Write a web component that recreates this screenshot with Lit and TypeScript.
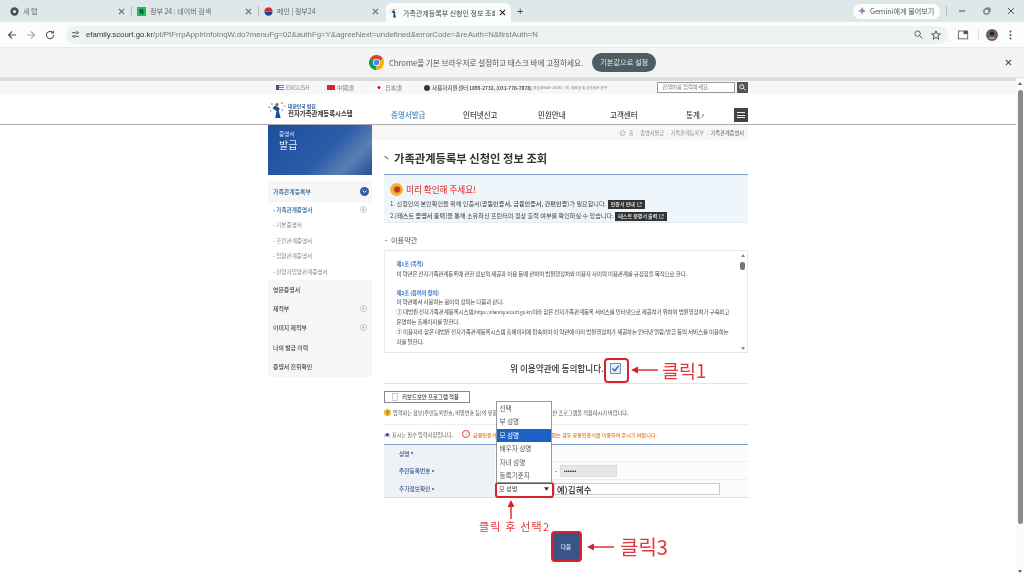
import { LitElement, css, html, svg } from 'lit'
import { customElement } from 'lit/decorators.js'

const chromeLogo = svg`<svg class="ic" width="15" height="15" viewBox="0 0 24 24">
  <path d="M12 12 L22.4 6 A12 12 0 0 0 1.6 6 Z" fill="#db4437"/>
  <path d="M12 12 L1.6 6 A12 12 0 0 0 12 24 Z" fill="#0f9d58"/>
  <path d="M12 12 L12 24 A12 12 0 0 0 22.4 6 Z" fill="#f4b400"/>
  <circle cx="12" cy="12" r="5.6" fill="#fff"/><circle cx="12" cy="12" r="4.4" fill="#4285f4"/></svg>`

const closeX = (color = '#666') => svg`<svg width="7" height="7" viewBox="0 0 8 8">
  <path d="M1 1 L7 7 M7 1 L1 7" stroke=${color} stroke-width="1.2" fill="none"/></svg>`

const familyLogo = (size: number) => svg`<svg width=${size} height=${size} viewBox="0 0 20 20">
  <path d="M8 5 L13 8 L12 11 L14 19 L8 19 L9.5 11 L5 8 Z" fill="#17508f"/>
  <circle cx="10" cy="3.8" r="1.7" fill="#d2333b"/>
  <circle cx="4.4" cy="3.4" r=".9" fill="#2f7fc4"/><circle cx="1.4" cy="7" r=".9" fill="#2f7fc4"/>
  <circle cx="3" cy="11" r=".8" fill="#3aa35a"/>
  <circle cx="15.5" cy="2.4" r=".9" fill="#3aa35a"/><circle cx="18.6" cy="6" r=".9" fill="#e2a02c"/>
  <circle cx="16" cy="10" r=".8" fill="#2f7fc4"/></svg>`

const circleIcon = svg`<svg class="ci" width="7" height="7" viewBox="0 0 8 8">
  <circle cx="4" cy="4" r="3.4" fill="#f7f7f7" stroke="#9aa5b5" stroke-width=".7"/>
  <path d="M3.2 2.6 L5 4 L3.2 5.4 Z" fill="#7c8aa0"/></svg>`

const extLink = svg`<svg width="5" height="5" viewBox="0 0 6 6">
  <path d="M2.4 1 H.6 V5.4 H5 V3.6 M3.2 .6 H5.4 V2.8 M5.2 .8 L2.8 3.2" stroke="#ddd" stroke-width=".7" fill="none"/></svg>`

const subItems = ['가족관계증명서', '기본증명서', '혼인관계증명서', '입양관계증명서', '친양자입양관계증명서']
const selectOptions = ['선택', '부 성명', '모 성명', '배우자 성명', '자녀 성명', '등록기준지']

@customElement('app-root')
export class AppRoot extends LitElement {
  render() {
    return html`
      <div class="tabstrip">
        <div class="tab t1">
          <svg width="9" height="9" viewBox="0 0 10 10"><circle cx="5" cy="5" r="4.6" fill="#4a4f50"/><circle cx="5" cy="5" r="1.8" fill="#dfe8e8"/></svg>
          <span class="tab-title">새 탭</span>${closeX()}
        </div>
        <i class="tab-sep"></i>
        <div class="tab t2">
          <span class="naver">N</span>
          <span class="tab-title">정부 24 : 네이버 검색</span>${closeX()}
        </div>
        <i class="tab-sep"></i>
        <div class="tab t3">
          <svg width="9" height="9" viewBox="0 0 10 10"><circle cx="5" cy="5" r="4.6" fill="#fff"/><path d="M.4 5 A4.6 4.6 0 0 1 9.6 5 Z" fill="#d22b3a"/><path d="M.4 5 A4.6 4.6 0 0 0 9.6 5 Z" fill="#19428f"/></svg>
          <span class="tab-title">메인 | 정부24</span>${closeX()}
        </div>
        <div class="tab active">
          ${familyLogo(10)}
          <span class="tab-title">가족관계등록부 신청인 정보 조회</span>${closeX('#222')}
        </div>
        <span class="plus">+</span>
        <span class="grow"></span>
        <div class="gemini">
          <svg width="8" height="8" viewBox="0 0 10 10"><path d="M5 0 C5.4 3 7 4.6 10 5 C7 5.4 5.4 7 5 10 C4.6 7 3 5.4 0 5 C3 4.6 4.6 3 5 0 Z" fill="#4d86e8"/><path d="M5 0 C5.4 3 7 4.6 10 5 H5 Z" fill="#e8685d"/><path d="M5 10 C4.6 7 3 5.4 0 5 H5 Z" fill="#e9b33e"/></svg>
          Gemini에게 물어보기
        </div>
        <i class="tab-sep gem-sep"></i>
        <div class="win">
          <svg width="8" height="8" viewBox="0 0 8 8"><path d="M1 4 H7" stroke="#444" stroke-width="1"/></svg>
          <svg width="8" height="8" viewBox="0 0 8 8"><rect x="1" y="2" width="5" height="5" rx="1.2" fill="none" stroke="#444"/><path d="M3 1 H7 V5" fill="none" stroke="#444" stroke-width=".8"/></svg>
          <svg width="8" height="8" viewBox="0 0 8 8"><path d="M1 1 L7 7 M7 1 L1 7" stroke="#444" stroke-width=".9"/></svg>
        </div>
      </div>

      <div class="toolbar">
        <svg class="nav-ic" width="10" height="10" viewBox="0 0 10 10"><path d="M9 5 H1.5 M5 1.5 L1.5 5 L5 8.5" fill="none" stroke="#555" stroke-width="1.1"/></svg>
        <svg class="nav-ic" width="10" height="10" viewBox="0 0 10 10"><path d="M1 5 H8.5 M5 1.5 L8.5 5 L5 8.5" fill="none" stroke="#aaa" stroke-width="1.1"/></svg>
        <svg class="nav-ic" width="10" height="10" viewBox="0 0 10 10"><path d="M8.6 5 A3.6 3.6 0 1 1 7.5 2.4 M8.4 .8 V3 H6.2" fill="none" stroke="#555" stroke-width="1.1"/></svg>
        <div class="omnibox">
          <svg width="9" height="9" viewBox="0 0 10 10"><path d="M1 3 H5 M8 3 H9 M1 7 H2 M5 7 H9" stroke="#444" stroke-width="1"/><circle cx="6.5" cy="3" r="1.2" fill="none" stroke="#444" stroke-width=".9"/><circle cx="3.5" cy="7" r="1.2" fill="none" stroke="#444" stroke-width=".9"/></svg>
          <span class="url"><b>efamily.scourt.go.kr</b>/pt/PtFrrpApplrInfoInqW.do?menuFg=02&amp;authFg=Y&amp;agreeNext=undefined&amp;errorCode=&amp;reAuth=N&amp;firstAuth=N</span>
          <span class="grow"></span>
          <svg width="9" height="9" viewBox="0 0 10 10"><circle cx="4" cy="4" r="3" fill="none" stroke="#555"/><path d="M6.2 6.2 L9.4 9.4" stroke="#555" stroke-width="1.1"/></svg>
          <svg width="10" height="10" viewBox="0 0 10 10"><path d="M5 .8 L6.2 3.8 L9.4 4 L6.9 6 L7.8 9.2 L5 7.4 L2.2 9.2 L3.1 6 L.6 4 L3.8 3.8 Z" fill="none" stroke="#444" stroke-width=".9"/></svg>
        </div>
        <svg class="side-ic" width="11" height="10" viewBox="0 0 12 10"><rect x=".6" y=".6" width="10" height="8.6" fill="none" stroke="#555" stroke-width=".9"/><rect x="6" y=".6" width="4.6" height="3.4" fill="#555"/></svg>
        <i class="bar-sep"></i>
        <svg class="avatar" width="12" height="12" viewBox="0 0 12 12"><circle cx="6" cy="6" r="6" fill="#6a5f5c"/><circle cx="6" cy="4.5" r="2.2" fill="#2c2727"/><path d="M2 10 A4.4 4 0 0 1 10 10 Z" fill="#b09a94"/></svg>
        <svg class="dots" width="3" height="10" viewBox="0 0 3 10"><circle cx="1.5" cy="1.5" r=".9" fill="#444"/><circle cx="1.5" cy="5" r=".9" fill="#444"/><circle cx="1.5" cy="8.5" r=".9" fill="#444"/></svg>
      </div>

      <div class="infobar">
        ${chromeLogo}
        <span class="info-text">Chrome을 기본 브라우저로 설정하고 태스크 바에 고정하세요.</span>
        <span class="info-btn">기본값으로 설정</span>
        <span class="info-close">${closeX('#444')}</span>
      </div>

      <div class="viewport">
        <div class="page">
          <div class="util-wrap">
            <div class="util">
              <span class="lang l1"><i class="flag us"></i>ENGLISH</span>
              <span class="lang l2"><i class="flag cn"></i>中國語</span>
              <span class="lang l3"><i class="flag jp"></i>日本語</span>
              <span class="tel"><i class="phone"></i>사용자지원센터<b>1899-2732, (031-776-7878)</b><small>평일(09:00~18:00) / 토, 일요일 및 공휴일은 휴무</small></span>
              <span class="grow"></span>
              <span class="search-in">검색어를 입력하세요.</span>
              <span class="search-btn"><svg width="7" height="7" viewBox="0 0 8 8"><circle cx="3.2" cy="3.2" r="2.4" fill="none" stroke="#fff"/><path d="M5 5 L7.4 7.4" stroke="#fff"/></svg></span>
            </div>
          </div>
          <div class="head-wrap">
            <header class="head">
              <div class="brand">
                ${familyLogo(18)}
                <div><small>대한민국 법원</small><b>전자가족관계등록시스템</b></div>
              </div>
              <nav>
                <a class="on" style="width:72px">증명서발급</a>
                <a style="width:75px">인터넷신고</a>
                <a style="width:72px">민원안내</a>
                <a style="width:76px">고객센터</a>
                <a>통계<span class="ext">↗</span></a>
              </nav>
              <span class="grow"></span>
              <span class="burger"><i></i><i></i><i></i></span>
            </header>
          </div>

          <div class="body">
            <aside>
              <div class="banner"><small>증명서</small><b>발급</b></div>
              <div class="menu">
                <div class="m-top">가족관계등록부
                  <svg width="9" height="9" viewBox="0 0 10 10"><circle cx="5" cy="5" r="5" fill="#2f5eb0"/><path d="M3 4 L5 6 L7 4" fill="none" stroke="#fff" stroke-width="1.1"/></svg>
                </div>
                <div class="m-sub">
                  ${subItems.map((s, i) => html`<div class=${i === 0 ? 'sub on' : 'sub'}>- ${s}${i === 0 ? circleIcon : ''}</div>`)}
                </div>
                <div class="m-item">영문증명서</div>
                <div class="m-item">제적부${circleIcon}</div>
                <div class="m-item">이미지 제적부${circleIcon}</div>
                <div class="m-item">나의 발급 이력</div>
                <div class="m-item">증명서 진위확인</div>
              </div>
            </aside>

            <main>
              <div class="crumb">
                <svg width="7" height="7" viewBox="0 0 8 8"><path d="M1 4 L4 1 L7 4 M2 3.6 V7 H6 V3.6" fill="none" stroke="#888" stroke-width=".7"/></svg>
                <span>홈</span><em>›</em><span>증명서발급</span><em>›</em><span>가족관계등록부</span><em>›</em><span class="dark">가족관계증명서</span>
              </div>
              <div class="content">
                <h1>가족관계등록부 신청인 정보 조회</h1>
                <section class="notice">
                  <div class="n-title"><i class="megaphone"></i>미리 확인해 주세요!</div>
                  <p>1. 신청인의 본인확인을 위해 인증서(<b>공동인증서, 금융인증서, 간편인증</b>)가 필요합니다. <span class="chip">인증서 안내 ${extLink}</span></p>
                  <p>2.[<b>테스트 증명서 출력</b>]을 통해 소유하신 프린터의 정상 출력 여부를 확인하실 수 있습니다. <span class="chip">테스트 증명서 출력 ${extLink}</span></p>
                </section>
                <div class="terms-title">이용약관</div>
                <section class="terms">
                  <div class="terms-text">
                    <h4>제1조 (목적)</h4>
                    <p>이 약관은 전자가족관계등록에 관한 정보의 제공과 이용 등에 관하여 법원행정처와 이용자 사이의 이용관계를 규정함을 목적으로 한다.</p>
                    <h4 class="second">제2조 (용어의 정의)</h4>
                    <p>이 약관에서 사용하는 용어의 정의는 다음과 같다.</p>
                    <p>① 대법원 전자가족관계등록시스템<span class="link">(https://efamily.scourt.go.kr)</span>이라 함은 전자가족관계등록 서비스를 인터넷으로 제공하기 위하여 법원행정처가 구축하고 운영하는 홈페이지를 말한다.</p>
                    <p>② 이용자라 함은 대법원 전자가족관계등록시스템 홈페이지에 접속하여 이 약관에 따라 법원행정처가 제공하는 인터넷 열람/발급 등의 서비스를 이용하는 자를 말한다.</p>
                  </div>
                  <div class="sb-mini"><span class="up"></span><span class="th"></span><span class="grow"></span><span class="dn"></span></div>
                </section>
                <div class="agree">
                  <span>위 이용약관에 동의합니다.</span>
                  <span class="check"><svg width="11" height="11" viewBox="0 0 11 11"><rect x=".5" y=".5" width="10" height="10" fill="#e8eef6" stroke="#6d8fbe"/><path d="M2.4 5.4 L4.8 7.8 L8.8 2.6" fill="none" stroke="#2f62b0" stroke-width="1.4"/></svg></span>
                </div>
                <div class="kb"><i></i>키보드보안 프로그램 적용</div>
                <div class="warn"><i>?</i>입력하는 정보(주민등록번호, 비밀번호 등)의 유출을 방지하기 위해 키보드보안 프로그램을 적용하시기 바랍니다.</div>
                <div class="req">
                  <span class="req-a"><em>(●)</em> 표시는 필수 입력사항입니다.</span>
                  <i>!</i>
                  <span class="req-b">금융인증서로 본인인증이 이루어지지 않는 경우 공동인증서를 이용하여 주시기 바랍니다.</span>
                </div>
                <div class="form">
                  <div class="row"><label>성명 <u></u></label><div class="val"></div></div>
                  <div class="row"><label>주민등록번호 <u></u></label>
                    <div class="val rrn"><span>-</span><span class="masked">•••••••</span></div></div>
                  <div class="row"><label>추가정보확인 <u></u></label>
                    <div class="val extra">
                      <span class="sel">모 성명<svg width="5" height="4" viewBox="0 0 6 4"><path d="M0 0 H6 L3 4 Z" fill="#333"/></svg></span>
                      <span class="inp">예)김혜수</span>
                    </div></div>
                  <div class="options">
                    ${selectOptions.map((o, i) => html`<div class=${i === 2 ? 'opt hi' : 'opt'}>${o}</div>`)}
                  </div>
                </div>
                <div class="next-wrap"><span class="next">다음</span></div>
              </div>
            </main>
          </div>
        </div>
        <div class="scroll"><span class="s-up"></span><span class="s-th"></span><span class="grow"></span><span class="s-dn"></span></div>

        <!-- red tutorial marks drawn over the page -->
        <div class="mark box-check"></div>
        <div class="mark box-select"></div>
        <svg class="arrows" width="1024" height="498" viewBox="0 78 1024 498">
          <g fill="#d8232a" stroke="#d8232a">
            <path d="M658 370 H636" stroke-width="1.4"/><path d="M631 370 L638 366.5 V373.5 Z" stroke="none"/>
            <path d="M511 519 V505" stroke-width="1.4"/><path d="M511 500 L507.5 507 H514.5 Z" stroke="none"/>
            <path d="M614 547 H593" stroke-width="1.4"/><path d="M587 547 L594 543.5 V550.5 Z" stroke="none"/>
          </g>
        </svg>
        <span class="note n1">클릭1</span>
        <span class="note n2">클릭 후 선택2</span>
        <span class="note n3">클릭3</span>
      </div>
    `
  }

  static styles = css`
    :host {
      display: flex;
      flex-direction: column;
      width: 1024px;
      height: 576px;
      overflow: hidden;
      background: #fff;
      color: #333;
      font-family: 'Noto Sans CJK KR', 'Noto Sans', sans-serif;
      filter: blur(0.4px);
    }
    i, u { display: block; font-style: normal; text-decoration: none; }
    .grow { flex: 1; }
    p, h1, h4 { margin: 0; }

    /* browser tabs */
    .tabstrip { height: 22px; flex: none; display: flex; align-items: center; background: #dfe8e9; padding-left: 6px; }
    .tab { display: flex; align-items: center; height: 22px; padding: 0 6px 0 5px; gap: 4px; box-sizing: border-box; font-size: 7px; color: #666; }
    .t1 { width: 125px; padding-left: 4px; }
    .t2 { width: 126px; }
    .t3 { width: 126px; }
    .tab-title { flex: 1; white-space: nowrap; overflow: hidden; }
    .tab svg { flex: none; }
    .tab.active { width: 125px; height: 19px; margin: 3px 0 0 1px; background: #fbfdfc; border-radius: 6px 6px 0 0; color: #444; padding: 0 5px 0 3px; }
    .tab-sep { width: 1px; height: 10px; background: #b4bebf; flex: none; }
    .naver { width: 9px; height: 9px; background: #19c15a; color: #123; font-size: 6px; font-weight: 700; line-height: 9px; text-align: center; flex: none; }
    .plus { margin-left: 6px; font: 11px 'Liberation Sans', sans-serif; color: #444; }
    .gemini { display: flex; align-items: center; gap: 4px; width: 87px; height: 15px; box-sizing: border-box; padding-left: 5px; background: #fbfdfd; border-radius: 8px; font-size: 7.1px; color: #555; white-space: nowrap; }
    .gem-sep { margin-left: 6px; }
    .win { display: flex; justify-content: space-between; width: 57px; margin: 0 9px 0 11px; }

    /* toolbar */
    .toolbar { height: 26px; flex: none; display: flex; align-items: center; background: #fbfdfc; box-sizing: border-box; border-bottom: 1px solid #e6eaea; padding-left: 7px; }
    .nav-ic { margin-right: 9px; flex: none; }
    .omnibox { margin-left: 2px; width: 882px; height: 18px; flex: none; box-sizing: border-box; display: flex; align-items: center; gap: 6px; padding: 0 7px 0 2px; background: #eef2f2; border-radius: 9px; }
    .omnibox svg { margin-left: 3px; }
    .url { font: 7.8px 'Liberation Sans', sans-serif; color: #777; white-space: nowrap; }
    .url b { font-weight: 400; color: #333; }
    .omnibox svg:last-child { margin-left: 2px; }
    .side-ic { margin-left: 10px; flex: none; }
    .bar-sep { width: 1px; height: 10px; background: #ddd; margin-left: 9px; }
    .avatar { margin-left: 7px; flex: none; }
    .dots { margin-left: 11px; flex: none; }

    /* infobar */
    .infobar { height: 30px; flex: none; display: flex; align-items: center; background: #f2f5f4; box-sizing: border-box; padding-left: 369px; border-bottom: 1px solid #e4e4e4; }
    .info-text { margin-left: 5px; font-size: 7.6px; color: #555; white-space: nowrap; }
    .info-btn { margin-left: 9px; width: 64px; height: 19px; line-height: 18px; text-align: center; border-radius: 10px; background: #4c5f60; color: #e6eeee; font-size: 7.2px; }
    .info-close { margin-left: auto; margin-right: 12px; display: flex; }

    /* page + scrollbar */
    .viewport { position: relative; flex: 1; display: flex; min-height: 0; }
    .page { flex: 1; min-width: 0; overflow: hidden; }
    .scroll { width: 8px; flex: none; display: flex; flex-direction: column; align-items: center; background: #fbfbfb; padding: 4px 0 3px; box-sizing: border-box; }
    .s-up, .s-dn { width: 0; height: 0; border: 2.5px solid transparent; }
    .s-up { border-bottom: 3px solid #666; border-top: 0; }
    .s-dn { border-top: 3px solid #666; border-bottom: 0; }
    .s-th { width: 5px; height: 434px; background: #8c8c8c; border-radius: 3px; margin-top: 5px; }

    /* utility row */
    .util-wrap { background: #f7f7f7; border-top: 3px solid #ddd; }
    .util { height: 13px; margin-left: 268px; width: 480px; box-sizing: border-box; padding-left: 8px; display: flex; align-items: center; font-size: 5.6px; color: #888; white-space: nowrap; }
    .lang { display: flex; align-items: center; gap: 2px; flex: none; }
    .l1 { width: 51px; }
    .l2 { width: 48px; }
    .l3 { width: 49px; }
    .flag { width: 8px; height: 5px; }
    .flag.us { background: repeating-linear-gradient(180deg, #c9566a 0 1px, #fff 1px 2px); box-shadow: inset 3px 0 0 #3a5488; }
    .flag.cn { background: #d8232a; }
    .flag.jp { background: radial-gradient(circle, #d8232a 0 1.4px, #fff 1.7px); }
    .tel { display: flex; align-items: center; gap: 0; color: #333; font-size: 5.6px; }
    .tel b { font-weight: 500; font-size: 5px; margin-left: 1px; }
    .tel small { font-size: 3.7px; color: #777; margin-left: 1px; }
    .phone { width: 6px; height: 6px; border-radius: 50%; background: #333; margin-right: 2px; }
    .search-in { width: 78px; height: 11px; box-sizing: border-box; border: 1px solid #999; background: #fff; font-size: 5.4px; line-height: 9px; padding-left: 4px; color: #777; }
    .search-btn { width: 11px; height: 11px; margin-left: 2px; background: #555; display: flex; align-items: center; justify-content: center; }

    /* site header */
    .head-wrap { border-bottom: 1px solid #aaa; }
    .head { height: 30px; margin-left: 268px; width: 480px; display: flex; align-items: center; }
    .brand { display: flex; align-items: center; gap: 2px; width: 123px; flex: none; margin-top: 1px; }
    .brand div { display: flex; flex-direction: column; white-space: nowrap; }
    .brand small { font-size: 4.8px; line-height: 7px; font-weight: 700; color: #2a5a9a; }
    .brand b { font-size: 6.4px; line-height: 9px; font-weight: 700; color: #333; }
    nav { display: flex; font-size: 7.5px; font-weight: 500; color: #444; white-space: nowrap; margin-top: 11px; }
    nav .on { color: #4b84b4; }
    nav .ext { font-size: 5px; color: #777; }
    .burger { width: 14px; height: 14px; margin-top: 12px; background: #444; display: flex; flex-direction: column; justify-content: center; gap: 1.6px; align-items: center; }
    .burger i { width: 8px; height: 1px; background: #eee; }

    .body { margin-left: 268px; width: 480px; display: flex; }

    /* sidebar */
    aside { width: 104px; flex: none; }
    .banner { height: 50px; box-sizing: border-box; padding: 5px 0 0 11px; background: linear-gradient(135deg, #1d4f9f 0%, #2a5ca8 55%, #5b7fb5 78%, #24508f 100%); color: #dfe8f5; display: flex; flex-direction: column; }
    .banner small { font-size: 5.6px; line-height: 8px; }
    .banner b { font-size: 10px; line-height: 14px; font-weight: 400; }
    .menu { margin-top: 6px; background: #f6f6f6; font-size: 5.9px; color: #444; padding-bottom: 1px; }
    .m-top { height: 21px; display: flex; align-items: center; justify-content: space-between; padding: 0 3px 0 5px; font-weight: 500; color: #2c5f8f; }
    .m-sub { background: #fff; }
    .sub { height: 15.5px; display: flex; align-items: center; justify-content: space-between; padding: 0 5px 0 5px; font-size: 5.6px; color: #888; }
    .sub.on { color: #2c5f8f; font-weight: 500; }
    .m-item { height: 19.3px; display: flex; align-items: center; justify-content: space-between; padding: 0 5px; font-weight: 500; }

    /* breadcrumb */
    main { flex: 1; min-width: 0; }
    .crumb { height: 15px; background: #f7f7f7; display: flex; justify-content: flex-end; align-items: center; gap: 2.5px; padding-right: 4px; font-size: 5.2px; color: #888; white-space: nowrap; }
    .crumb em { font-style: normal; color: #bbb; }
    .crumb .dark { color: #555; }

    .content { padding-left: 12px; }
    h1 { height: 35px; box-sizing: border-box; border-bottom: 1px solid #7f9dc9; padding: 9px 0 0 10px; font-size: 11.3px; line-height: 18px; font-weight: 700; color: #333; white-space: nowrap; position: relative; }
    h1::before { content: ''; position: absolute; left: 0; top: 17px; width: 5px; height: 1px; background: #3a6aa8; transform: rotate(40deg); }

    /* notice */
    .notice { height: 48px; box-sizing: border-box; background: #eff6fb; padding: 7px 0 0 6px; font-size: 6.15px; line-height: 12px; color: #444; white-space: nowrap; border-bottom: 1px solid #e6edf2; }
    .n-title { display: flex; align-items: center; gap: 3px; height: 14px; font-size: 8.6px; font-weight: 500; color: #e0473c; margin-bottom: 2px; }
    .megaphone { width: 13px; height: 13px; border-radius: 50%; background: radial-gradient(circle at 55% 50%, #c23a22 0 2.4px, #f5b12f 4px); }
    .notice p b { font-weight: 500; }
    .chip { display: inline-flex; align-items: center; gap: 2px; height: 9px; padding: 0 3px; background: #333; color: #eee; font-size: 5px; font-weight: 500; vertical-align: middle; }

    /* terms */
    .terms-title { height: 16px; margin-top: 9px; padding-left: 7px; font-size: 7.2px; line-height: 16px; color: #555; position: relative; }
    .terms-title::before { content: ''; position: absolute; left: 1px; top: 8px; width: 2px; height: 1px; background: #7f9dc9; }
    .terms { margin-top: 2px; height: 103px; box-sizing: border-box; border: 1px solid #e8e8e8; display: flex; }
    .terms-text { flex: 1; padding: 9px 5px 0 11.5px; font-size: 5.5px; line-height: 9.8px; color: #444; letter-spacing: -0.02em; word-break: break-all; min-width: 0; }
    .terms-text .link { font-size: 4.4px; letter-spacing: 0; }
    .terms-text h4 { font-size: 5.3px; font-weight: 700; color: #3b73c8; line-height: 9.8px; }
    .terms-text h4.second { margin-top: 9px; }
    .sb-mini { width: 9px; flex: none; display: flex; flex-direction: column; align-items: center; padding: 3px 0 2px; box-sizing: border-box; }
    .up, .dn { width: 0; height: 0; border: 2.5px solid transparent; }
    .up { border-bottom: 3px solid #888; border-top: 0; }
    .dn { border-top: 3px solid #888; border-bottom: 0; }
    .th { width: 5px; height: 8px; margin-top: 5px; background: #777; border-radius: 2px; }

    .agree { height: 31px; box-sizing: border-box; border-bottom: 1px solid #e4e4e4; display: flex; align-items: center; padding-left: 126px; font-size: 8.65px; font-weight: 500; color: #333; white-space: nowrap; }
    .check { margin-left: 6px; display: flex; }

    /* keyboard + warnings */
    .kb { margin-top: 7px; width: 86px; height: 12px; box-sizing: border-box; border: 1px solid #888; display: flex; align-items: center; gap: 4px; padding-left: 7px; font-size: 5.4px; font-weight: 500; color: #333; white-space: nowrap; }
    .kb i { width: 6px; height: 8px; border: 1px solid #ccc; box-sizing: border-box; }
    .warn { margin-top: 3px; height: 12px; display: flex; align-items: center; gap: 2px; font-size: 5.15px; color: #444; white-space: nowrap; }
    .warn i { width: 7px; height: 7px; border-radius: 50%; background: #e9b92c; font-size: 5px; line-height: 7px; text-align: center; font-weight: 700; flex: none; }
    .req { margin-top: 6px; padding-top: 3px; border-top: 1px solid #eee; height: 16px; box-sizing: border-box; display: flex; align-items: center; font-size: 5.2px; color: #555; white-space: nowrap; margin-bottom: 4px; }
    .req-a { width: 78px; }
    .req-a em { font-style: normal; color: #3a5488; font-size: 4px; }
    .req i { width: 8px; height: 8px; box-sizing: border-box; border: 1px solid #d8483a; border-radius: 50%; color: #d8483a; font-size: 5px; line-height: 6px; text-align: center; margin-right: 3px; }
    .req-b { font-weight: 500; color: #e07a1f; font-size: 5.1px; }

    /* form */
    .form { position: relative; border-top: 1px solid #7f9dc9; border-bottom: 1px solid #ddd; background: #fbfbfb; }
    .row { height: 17.4px; display: flex; border-bottom: 1px solid #eee; box-sizing: border-box; }
    .row:nth-child(3) { border-bottom: 0; height: 17.6px; }
    label { width: 111px; flex: none; box-sizing: border-box; padding-left: 15px; background: #eef1f6; display: flex; align-items: center; gap: 2px; font-size: 5.7px; font-weight: 500; color: #3a5488; }
    label u { width: 2px; height: 2px; border-radius: 50%; background: #2f5eb0; }
    .val { flex: 1; display: flex; align-items: center; }
    .rrn { padding-left: 60px; gap: 3px; font-size: 6px; }
    .masked { width: 57px; height: 12px; line-height: 10px; box-sizing: border-box; padding-left: 3px; background: #e6e6e6; border: 1px solid #ddd; font: 5px/10px 'Liberation Sans', sans-serif; color: #222; }
    .extra { padding-left: 1px; }
    .sel { width: 56px; height: 12px; box-sizing: border-box; display: flex; align-items: center; justify-content: space-between; padding: 0 3px 0 3px; background: #fff; font-size: 6.2px; color: #444; }
    .inp { margin-left: 2px; width: 166px; height: 12px; box-sizing: border-box; border: 1px solid #ccc; background: #fff; padding-left: 2px; font-size: 8.2px; line-height: 10px; font-weight: 500; color: #222; letter-spacing: .3px; }
    .options { position: absolute; left: 111.5px; bottom: 14px; width: 56px; background: #fff; border: 1px solid #999; box-sizing: border-box; font-size: 6.6px; color: #555; z-index: 2; }
    .opt { height: 13.4px; line-height: 13.4px; padding-left: 3px; }
    .opt.hi { background: #1b62c4; color: #fff; }

    .next-wrap { display: flex; justify-content: center; padding: 33px 0 0; }
    .next { width: 31px; height: 31px; box-sizing: border-box; border: 2px solid #d8232a; border-radius: 4px; background: #3a5488; color: #e8ecf5; font-size: 5.5px; font-weight: 500; display: flex; align-items: center; justify-content: center; }

    /* red tutorial marks */
    .mark { position: absolute; box-sizing: border-box; border: 2px solid #d8232a; border-radius: 3px; }
    .box-check { left: 604px; top: 280px; width: 25px; height: 25px; border-radius: 4px; }
    .box-select { left: 495px; top: 404px; width: 59px; height: 16px; }
    .arrows { position: absolute; left: 0; top: 0; pointer-events: none; }
    .note { position: absolute; color: #e2373a; white-space: nowrap; }
    .n1 { left: 662px; top: 278px; font-size: 18.5px; line-height: 28px; }
    .n2 { left: 479px; top: 441px; font-size: 11px; line-height: 14px; letter-spacing: 1.2px; }
    .n3 { left: 620px; top: 455px; font-size: 20px; line-height: 28px; }
  `
}

declare global {
  interface HTMLElementTagNameMap {
    'app-root': AppRoot
  }
}
